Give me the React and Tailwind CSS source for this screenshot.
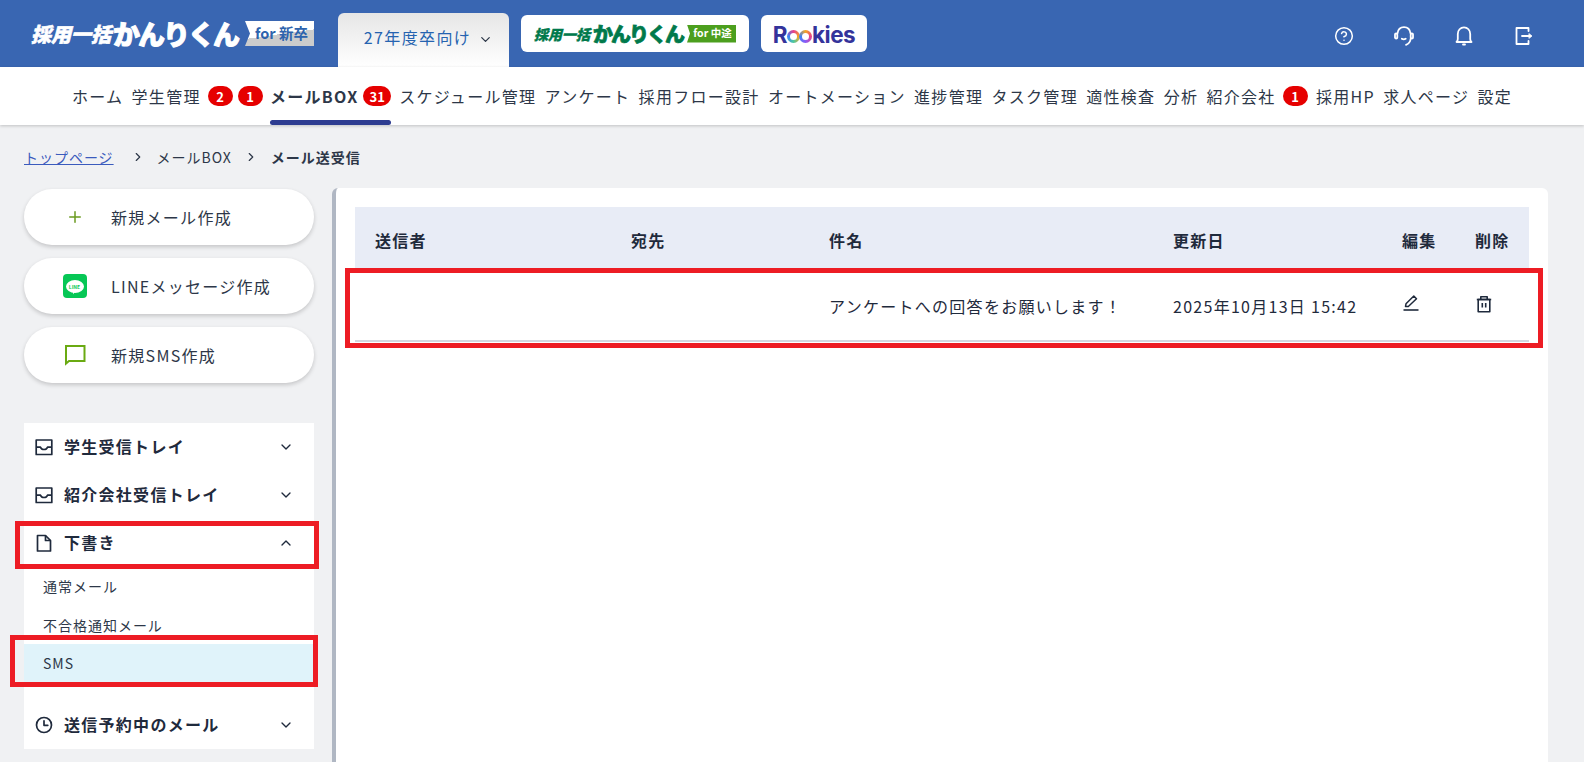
import { ChevronDown, ChevronRight, ChevronUp, CircleHelp, Plus } from 'lucide-react'

function Badge({ children }) {
  return (
    <span className="flex h-5 min-w-[25px] items-center justify-center rounded-full bg-[#e60000] px-1.5 text-[13px] font-bold leading-none tracking-normal text-white">
      {children}
    </span>
  )
}

function MainLogo() {
  return (
    <div className="ml-[31px] flex w-[283px] items-center text-white">
      <span className="w-[82px] whitespace-nowrap text-[20px] font-black italic leading-none tracking-[0] [-webkit-text-stroke:0.6px_white]">採用一括</span>
      <span className="w-[132px] whitespace-nowrap text-[27px] font-black leading-none tracking-[-2px] [-webkit-text-stroke:1px_white]">かんりくん</span>
      <span className="flex h-[25px] w-[69px] items-center justify-center bg-[linear-gradient(172deg,#fff_52%,#ccc_52%)] pl-1 text-[14.5px] font-bold leading-none text-[#2d63ad] [clip-path:polygon(0_0,100%_0,100%_100%,0_100%,5px_50%)]">
        for 新卒
      </span>
    </div>
  )
}

function MidCareerLogo() {
  return (
    <div className="ml-3 flex h-[37px] w-[228px] items-center justify-center rounded-md bg-white">
      <span className="w-[59px] whitespace-nowrap text-[14px] font-black italic leading-none tracking-[0] text-[#00794b] [-webkit-text-stroke:0.4px_#00794b]">採用一括</span>
      <span className="w-[94px] whitespace-nowrap text-[20px] font-black leading-none tracking-[-2px] text-[#00794b] [-webkit-text-stroke:0.7px_#00794b]">かんりくん</span>
      <span className="flex h-[18px] w-[49px] items-center justify-center bg-[#4c9f1e] pl-0.5 text-[10.5px] font-bold leading-none text-white [clip-path:polygon(0_0,100%_0,100%_100%,0_100%,3px_50%)]">
        for 中途
      </span>
    </div>
  )
}

function RookiesLogo() {
  return (
    <div className="ml-3 flex h-[37px] w-[106px] items-center justify-center rounded-md bg-white pt-1 font-['Inter',sans-serif] text-[22.5px] font-bold leading-none tracking-[-0.5px] text-[#34339b]">
      <span>R</span>
      <span className="relative top-px h-[13px] w-[13px] rounded-full bg-[conic-gradient(#e8408a,#f5a623,#4cc9a0,#3b82f6,#e8408a)] p-[3px]">
        <span className="block h-full w-full rounded-full bg-white" />
      </span>
      <span className="relative top-px -ml-px h-[13px] w-[13px] rounded-full bg-[conic-gradient(#f5a623,#e8408a,#8b5cf6,#3b82f6,#f5a623)] p-[3px]">
        <span className="block h-full w-full rounded-full bg-white" />
      </span>
      <span>kies</span>
    </div>
  )
}

function HeadsetIcon() {
  return (
    <svg width="20" height="20" viewBox="0 0 20 20" fill="none" stroke="currentColor" strokeWidth="1.800" strokeLinecap="round" strokeLinejoin="round">
      <path d="M3.500 7.500C4 3.500 6.500 1.200 10 1.200s6 2.300 6.500 6.300" />
      <rect x="1" y="7.500" width="2.300" height="5" rx="1.100" />
      <rect x="16.700" y="7.500" width="2.300" height="5" rx="1.100" />
      <path d="M16.700 12.500c-.3 3-1.800 5.300-4.700 6.300" />
      <path d="M7.800 12.800c1 .6 2.900.6 3.900 0" />
    </svg>
  )
}

function BellIcon() {
  return (
    <svg width="20" height="20" viewBox="0 0 20 20" fill="none" stroke="currentColor" strokeWidth="1.800" strokeLinecap="round" strokeLinejoin="round">
      <path d="M2.500 16h15c-.8-.7-1.300-1.600-1.300-3V8c0-3.700-2.600-6.700-6.200-6.700S3.800 4.300 3.800 8v5c0 1.400-.5 2.300-1.300 3z" />
      <path d="M9 18.500h2" />
    </svg>
  )
}

function LogoutIcon() {
  return (
    <svg width="20" height="20" viewBox="0 0 20 20" fill="none" stroke="currentColor" strokeWidth="1.800" strokeLinecap="round" strokeLinejoin="round">
      <path d="M14.500 5V2H2.500v16h12v-3" />
      <path d="M8 10h8" />
      <path d="M15.200 7.800 18 10l-2.800 2.200z" fill="currentColor" strokeWidth="0.800" />
    </svg>
  )
}

function TrayIcon() {
  return (
    <svg width="18" height="18" viewBox="0 0 18 18" fill="none" stroke="currentColor" strokeWidth="1.700" strokeLinejoin="round">
      <rect x="1.200" y="2" width="15.600" height="14.500" />
      <path d="M1.200 9.200h4.300c.6 1.600 2 2.300 3.500 2.300s2.900-.7 3.500-2.300h4.300" />
    </svg>
  )
}

function FileIcon() {
  return (
    <svg width="18" height="18" viewBox="0 0 18 18" fill="none" stroke="currentColor" strokeWidth="1.700" strokeLinejoin="round">
      <path d="M2.500 1.500h8l5 5v10.500h-13z" />
      <path d="M10.500 1.500v5h5" />
    </svg>
  )
}

function ClockIcon() {
  return (
    <svg width="18" height="18" viewBox="0 0 18 18" fill="none" stroke="currentColor" strokeWidth="1.700" strokeLinecap="round" strokeLinejoin="round">
      <circle cx="9" cy="9" r="7.500" />
      <path d="M9 4.800V9.300h3.800" />
    </svg>
  )
}

function PencilIcon() {
  return (
    <svg width="18" height="18" viewBox="0 0 18 18" fill="none" stroke="currentColor" strokeWidth="1.500" strokeLinejoin="round">
      <path d="M3.500 12.500 4 9.800 11.800 2l2.700 2.700L6.300 12.500z" />
      <path d="M1.500 16h15" strokeWidth="1.600" />
    </svg>
  )
}

function TrashIcon() {
  return (
    <svg width="18" height="18" viewBox="0 0 18 18" fill="none" stroke="currentColor" strokeWidth="1.600" strokeLinejoin="round">
      <path d="M1.800 4.500h14.400" />
      <path d="M5.800 4.500V1.800h6.400v2.700" />
      <path d="M3.200 4.500v12.300h11.600V4.500z" />
      <path d="M7.300 8v4.500M10.700 8v4.500" />
    </svg>
  )
}

function LineIcon() {
  return (
    <span className="relative flex h-6 w-6 items-center justify-center rounded-[4px] bg-[#06c755]">
      <span className="flex h-[13px] w-[18px] items-center justify-center rounded-[50%] bg-white text-[5px] font-bold leading-none tracking-normal text-[#06c755]">
        LINE
      </span>
      <span className="absolute bottom-[3px] left-[10px] h-[4px] w-[3px] bg-white [clip-path:polygon(0_0,100%_0,0_100%)]" />
    </span>
  )
}

function ChatIcon() {
  return (
    <svg width="22" height="22" viewBox="0 0 22 22" fill="none" stroke="#6aaa12" strokeWidth="2">
      <path d="M2 2h18.500v15H5l-3 2.500z" />
    </svg>
  )
}

function ActionButton({ icon, label }) {
  return (
    <button className="flex h-14 w-full items-center rounded-full bg-white text-base tracking-[0.08em] text-[#2d3748] shadow-[0_2px_4px_rgba(0,0,0,0.18)]">
      <span className="flex w-[87px] justify-center pl-[14px]">{icon}</span>
      <span>{label}</span>
    </button>
  )
}

function FolderRow({ icon, label, open }) {
  return (
    <div className="flex h-12 items-center pl-[11px] pr-5 text-[#1f2a3c]">
      <span className="flex w-[18px] justify-center">{icon}</span>
      <span className="ml-[11px] -mt-0.5 flex-1 text-base font-bold tracking-[0.08em]">{label}</span>
      {open ? <ChevronUp size={16} strokeWidth={2} /> : <ChevronDown size={16} strokeWidth={2} />}
    </div>
  )
}

function SubRow({ label, active }) {
  return (
    <div className={`flex h-[38.4px] items-center pl-[19px] text-sm tracking-[0.07em] text-[#2d3748] ${active ? 'bg-[#e0f3fa]' : ''}`}>
      {label}
    </div>
  )
}

function RedFrame({ className }) {
  return <span className={`pointer-events-none absolute border-[5px] border-[#ed1c24] ${className}`} />
}

const navItems = [
  { label: 'ホーム' },
  { label: '学生管理', badges: ['2', '1'] },
  { label: 'メールBOX', badges: ['31'], active: true },
  { label: 'スケジュール管理' },
  { label: 'アンケート' },
  { label: '採用フロー設計' },
  { label: 'オートメーション' },
  { label: '進捗管理' },
  { label: 'タスク管理' },
  { label: '適性検査' },
  { label: '分析' },
  { label: '紹介会社', badges: ['1'] },
  { label: '採用HP' },
  { label: '求人ページ' },
  { label: '設定' },
]

export default function App() {
  return (
    <div className="flex h-screen flex-col overflow-hidden bg-[#f0f1f3] font-['Noto_Sans_CJK_JP','Noto_Sans',sans-serif] text-[#2d3748]">
      <header className="flex h-[67px] shrink-0 items-center bg-[#3966b2]">
        <MainLogo />
        <div className="ml-6 mt-[13px] flex h-[54px] w-[171px] items-center justify-center gap-[7px] self-start rounded-t-md bg-[linear-gradient(#e6e6e6,#fff)] pb-1.5 pl-[10px] text-base tracking-[0.085em] text-[#2563b0]">
          27年度卒向け
          <ChevronDown size={15} strokeWidth={2} className="mt-1 text-[#2d3748]" />
        </div>
        <MidCareerLogo />
        <RookiesLogo />
        <div className="ml-auto mr-[50px] mt-1 flex gap-10 text-white">
          <CircleHelp size={20} strokeWidth={1.800} />
          <HeadsetIcon />
          <BellIcon />
          <LogoutIcon />
        </div>
      </header>

      <nav className="z-10 flex h-[58px] shrink-0 items-center justify-center gap-[8.3px] bg-white text-base tracking-[0.08em] text-[#2d3748] shadow-[0_1px_3px_rgba(0,0,0,0.2)]">
        {navItems.map((item) => (
          <div key={item.label} className={`relative flex h-full items-center ${item.active ? '-ml-px gap-[5px]' : 'gap-[7px]'}`}>
            <span className={item.active ? 'font-bold' : ''}>{item.label}</span>
            {item.badges && (
              <span className="flex gap-[5px]">
                {item.badges.map((b, i) => <Badge key={i}>{b}</Badge>)}
              </span>
            )}
            {item.active && <span className="absolute bottom-0 left-0 right-0 h-[5px] rounded-full bg-[#2e3d91]" />}
          </div>
        ))}
      </nav>

      <div className="flex h-[64px] shrink-0 items-center pl-6 text-sm tracking-[0.07em] text-[#2d3748]">
        <a className="text-[#3b5bbd] underline">トップページ</a>
        <ChevronRight size={14} strokeWidth={2} className="ml-[17px]" />
        <span className="ml-[12px]">メールBOX</span>
        <ChevronRight size={14} strokeWidth={2} className="ml-[12px]" />
        <span className="ml-[13px] font-bold">メール送受信</span>
      </div>

      <div className="flex min-h-0 flex-1 pl-6 pr-9">
        <aside className="w-[290px] shrink-0">
          <div className="flex flex-col gap-[13px]">
            <ActionButton icon={<Plus size={18} strokeWidth={2} className="text-[#6a9a1f]" />} label="新規メール作成" />
            <ActionButton icon={<LineIcon />} label="LINEメッセージ作成" />
            <ActionButton icon={<ChatIcon />} label="新規SMS作成" />
          </div>
          <div className="mt-10 bg-white">
            <FolderRow icon={<TrayIcon />} label="学生受信トレイ" />
            <FolderRow icon={<TrayIcon />} label="紹介会社受信トレイ" />
            <div className="relative">
              <FolderRow icon={<FileIcon />} label="下書き" open />
              <RedFrame className="-left-[9px] -right-[5px] top-[2px] -bottom-[2px]" />
            </div>
            <SubRow label="通常メール" />
            <SubRow label="不合格通知メール" />
            <div className="relative">
              <SubRow label="SMS" active />
              <RedFrame className="-left-[14px] -right-[4px] -top-[9px] -bottom-[5px]" />
            </div>
            <div className="mt-[19px]">
              <FolderRow icon={<ClockIcon />} label="送信予約中のメール" />
            </div>
          </div>
        </aside>

        <main className="ml-[18px] flex-1 -mt-px rounded-t-md border-l-4 border-l-[#b0b7c3] bg-white px-[19px] pt-[19px]">
          <table className="w-full table-fixed border-collapse text-left text-base tracking-[0.08em] text-[#1f2a3c]">
            <thead>
              <tr className="h-[63px] bg-[#e8ecf6]">
                <th className="w-[276px] pl-5 pt-0.5 font-bold">送信者</th>
                <th className="w-[198px] pt-0.5 font-bold">宛先</th>
                <th className="w-[344px] pt-0.5 font-bold">件名</th>
                <th className="w-[229px] pt-0.5 font-bold">更新日</th>
                <th className="w-[73px] pt-0.5 font-bold">編集</th>
                <th className="pt-0.5 font-bold">削除</th>
              </tr>
            </thead>
            <tbody>
              <tr className="h-[71px] border-b-2 border-b-[#d3d7e0]">
                <td />
                <td />
                <td className="whitespace-nowrap pt-0.5">アンケートへの回答をお願いします！</td>
                <td className="whitespace-nowrap pt-0.5">2025年10月13日 15:42</td>
                <td className="pb-1"><PencilIcon /></td>
                <td className="pb-0.5"><TrashIcon /></td>
              </tr>
            </tbody>
          </table>
          <div className="relative">
            <RedFrame className="-left-[10px] -right-[14px] -top-[74px] h-[80px]" />
          </div>
        </main>
      </div>
    </div>
  )
}
